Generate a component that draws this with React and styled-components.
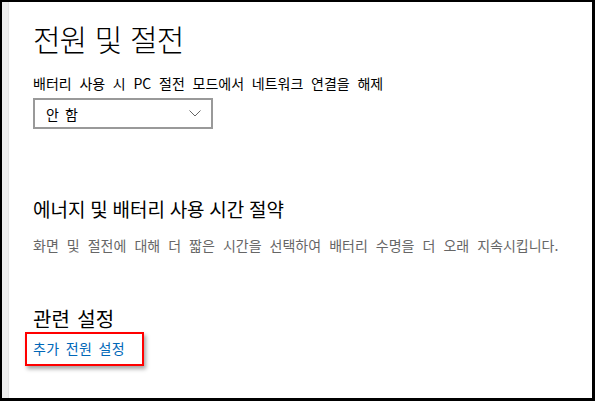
import React from 'react';
import styled, { createGlobalStyle } from 'styled-components';

const GlobalStyle = createGlobalStyle`
  html, body {
    margin: 0;
    padding: 0;
    background: #000;
  }
  body {
    font-family: "Noto Sans CJK KR", "Noto Sans", sans-serif;
  }
`;

const Frame = styled.div`
  width: 595px;
  height: 401px;
  box-sizing: border-box;
  border-style: solid;
  border-color: #000;
  border-width: 2px 3px 3px 2px;
  background: #fff;
  display: flex;
`;

const Gutter = styled.div`
  width: 6px;
  background: #f0f0f0;
  border-right: 1px solid #e6e6e6;
`;

const Content = styled.div`
  flex: 1;
  padding: 16px 0 0 24px;
  display: flex;
  flex-direction: column;
  color: #000;
`;

const Title = styled.h1`
  margin: 0;
  font-size: 30px;
  font-weight: 300;
  line-height: 40px;
  letter-spacing: -1px;
  word-spacing: 3px;
`;

const Label = styled.div`
  margin-top: 15px;
  font-size: 14px;
  line-height: 20px;
  word-spacing: 4.6px;
`;

const Select = styled.div`
  margin-top: 5px;
  width: 180px;
  height: 31px;
  box-sizing: border-box;
  border: 2px solid #999;
  display: flex;
  align-items: center;
  justify-content: space-between;
  padding: 0 10px 0 11px;
  font-size: 14px;
  word-spacing: 3px;
`;

const Heading = styled.h2`
  margin: ${p => p.gap}px 0 0;
  font-size: ${p => p.size}px;
  font-weight: 400;
  line-height: 28px;
  word-spacing: ${p => p.spread}px;
`;

const Desc = styled.p`
  margin: 12px 0 0;
  font-size: 14px;
  line-height: 20px;
  color: #666;
  word-spacing: 4.9px;
`;

const LinkBox = styled.div`
  margin: -1px 0 0 -8px;
  align-self: flex-start;
  border: 2px solid #ff0000;
  padding: 6px 17px 8px 6px;
  box-shadow: 2px 3px 4px rgba(0, 0, 0, 0.35);
`;

const Link = styled.a`
  font-size: 14px;
  line-height: 16px;
  color: #0067b8;
  text-decoration: none;
  display: block;
  letter-spacing: 0.3px;
  word-spacing: 3px;
`;

const Chevron = () => (
  <svg width="12" height="7" viewBox="0 0 12 7">
    <path d="M0.5 0.5 L6 6 L11.5 0.5" fill="none" stroke="#666" strokeWidth="1" />
  </svg>
);

export default function App() {
  return (
    <>
      <GlobalStyle />
      <Frame>
        <Gutter />
        <Content>
          <Title>전원 및 절전</Title>
          <Label>배터리 사용 시 PC 절전 모드에서 네트워크 연결을 해제</Label>
          <Select>
            <span>안 함</span>
            <Chevron />
          </Select>
          <Heading gap={66} size={19} spread={0.5}>에너지 및 배터리 사용 시간 절약</Heading>
          <Desc>화면 및 절전에 대해 더 짧은 시간을 선택하여 배터리 수명을 더 오래 지속시킵니다.</Desc>
          <Heading gap={50} size={20} spread={3}>관련 설정</Heading>
          <LinkBox>
            <Link href="#">추가 전원 설정</Link>
          </LinkBox>
        </Content>
      </Frame>
    </>
  );
}
